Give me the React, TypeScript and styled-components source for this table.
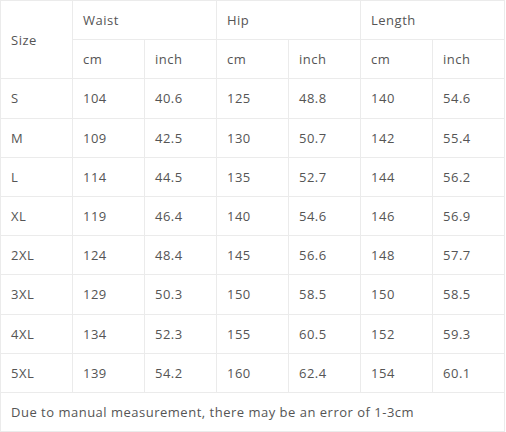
import React from "react";
import styled, { createGlobalStyle } from "styled-components";

const Global = createGlobalStyle`
  html, body { margin: 0; padding: 0; background: #fff; }
  body { font-family: "Open Sans", "Liberation Sans", sans-serif; }
`;

const Table = styled.table`
  width: 504px;
  border-collapse: collapse;
  table-layout: fixed;
  font-family: "Open Sans", "Liberation Sans", sans-serif;
  font-size: 13px;
  letter-spacing: 0.5px;
  color: #555;
`;

const Row = styled.tr`
  height: 39.2px;
`;

const Cell = styled.td`
  border: 1px solid #ebebeb;
  padding: 0 10px;
  text-align: left;
  vertical-align: middle;
  font-weight: 400;
  white-space: nowrap;
`;

const HeadCell = styled(Cell).attrs({ as: "th" })``;

const rows: [string, string, string, string, string, string, string][] = [
  ["S", "104", "40.6", "125", "48.8", "140", "54.6"],
  ["M", "109", "42.5", "130", "50.7", "142", "55.4"],
  ["L", "114", "44.5", "135", "52.7", "144", "56.2"],
  ["XL", "119", "46.4", "140", "54.6", "146", "56.9"],
  ["2XL", "124", "48.4", "145", "56.6", "148", "57.7"],
  ["3XL", "129", "50.3", "150", "58.5", "150", "58.5"],
  ["4XL", "134", "52.3", "155", "60.5", "152", "59.3"],
  ["5XL", "139", "54.2", "160", "62.4", "154", "60.1"],
];

export default function App() {
  return (
    <>
      <Global />
      <Table>
        <colgroup>
          {Array.from({ length: 7 }).map((_, i) => (
            <col key={i} style={{ width: 72 }} />
          ))}
        </colgroup>
        <thead>
          <Row>
            <HeadCell rowSpan={2}>Size</HeadCell>
            <HeadCell colSpan={2}>Waist</HeadCell>
            <HeadCell colSpan={2}>Hip</HeadCell>
            <HeadCell colSpan={2}>Length</HeadCell>
          </Row>
          <Row>
            <HeadCell>cm</HeadCell>
            <HeadCell>inch</HeadCell>
            <HeadCell>cm</HeadCell>
            <HeadCell>inch</HeadCell>
            <HeadCell>cm</HeadCell>
            <HeadCell>inch</HeadCell>
          </Row>
        </thead>
        <tbody>
          {rows.map((r) => (
            <Row key={r[0]}>
              {r.map((v, i) => (
                <Cell key={i}>{v}</Cell>
              ))}
            </Row>
          ))}
          <Row>
            <Cell colSpan={7}>
              Due to manual measurement, there may be an error of 1-3cm
            </Cell>
          </Row>
        </tbody>
      </Table>
    </>
  );
}
